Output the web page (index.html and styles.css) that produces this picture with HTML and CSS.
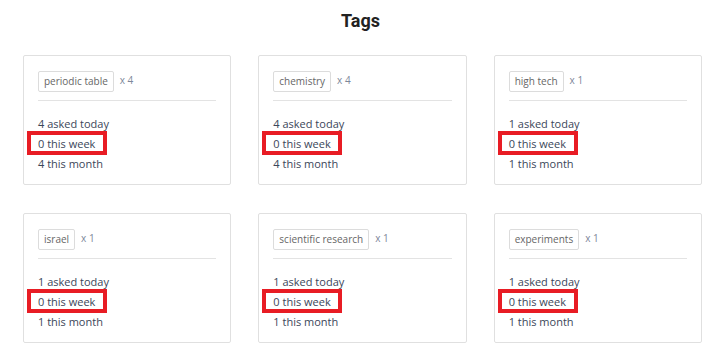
FILE: index.html
```html
<!DOCTYPE html>
<html>
<head>
  <title>Tags</title>
  <link rel="stylesheet" href="styles.css">
</head>
<body>

<h2 class="page-title">Tags</h2>

<div class="tag-grid">
  <div class="tag-card">
    <div class="tag-head">
      <span class="tag-pill">periodic table</span>
      <span class="tag-count">x 4</span>
    </div>
    <div class="tag-stats">
      <div>4 asked today</div>
      <div class="week">0 this week<span class="mark"></span></div>
      <div>4 this month</div>
    </div>
  </div>

  <div class="tag-card">
    <div class="tag-head">
      <span class="tag-pill">chemistry</span>
      <span class="tag-count">x 4</span>
    </div>
    <div class="tag-stats">
      <div>4 asked today</div>
      <div class="week">0 this week<span class="mark"></span></div>
      <div>4 this month</div>
    </div>
  </div>

  <div class="tag-card">
    <div class="tag-head">
      <span class="tag-pill">high tech</span>
      <span class="tag-count">x 1</span>
    </div>
    <div class="tag-stats">
      <div>1 asked today</div>
      <div class="week">0 this week<span class="mark"></span></div>
      <div>1 this month</div>
    </div>
  </div>

  <div class="tag-card">
    <div class="tag-head">
      <span class="tag-pill">israel</span>
      <span class="tag-count">x 1</span>
    </div>
    <div class="tag-stats">
      <div>1 asked today</div>
      <div class="week">0 this week<span class="mark"></span></div>
      <div>1 this month</div>
    </div>
  </div>

  <div class="tag-card">
    <div class="tag-head">
      <span class="tag-pill">scientific research</span>
      <span class="tag-count">x 1</span>
    </div>
    <div class="tag-stats">
      <div>1 asked today</div>
      <div class="week">0 this week<span class="mark"></span></div>
      <div>1 this month</div>
    </div>
  </div>

  <div class="tag-card">
    <div class="tag-head">
      <span class="tag-pill">experiments</span>
      <span class="tag-count">x 1</span>
    </div>
    <div class="tag-stats">
      <div>1 asked today</div>
      <div class="week">0 this week<span class="mark"></span></div>
      <div>1 this month</div>
    </div>
  </div>
</div>

</body>
</html>
```

FILE: styles.css
```css
body {
  margin: 0;
  font-family: "Open Sans", Arial, sans-serif;
  background: #fff;
}
.page-title {
  margin: 0;
  padding-top: 10px;
  height: 55px;
  box-sizing: border-box;
  text-align: center;
  font-family: Roboto, Arial, sans-serif;
  font-weight: 700;
  font-size: 18px;
  line-height: 22px;
  color: #222;
}
.tag-grid {
  display: grid;
  grid-template-columns: repeat(3, 1fr);
  column-gap: 27px;
  row-gap: 28px;
  padding: 0 19px 0 23px;
}
.tag-card {
  border: 1px solid #e0e0e0;
  border-radius: 2px;
  padding: 15px 14px 12px 14px;
  height: 130px;
  box-sizing: border-box;
}
.tag-head {
  display: flex;
  align-items: center;
  gap: 6px;
  padding-bottom: 8px;
  border-bottom: 1px solid #e3e3e3;
}
.tag-pill {
  border: 1px solid #dcdcdc;
  border-radius: 2px;
  padding: 0 5px;
  height: 19px;
  line-height: 19px;
  font-size: 10px;
  color: #666;
}
.tag-count {
  font-size: 10px;
  color: #7d879a;
  margin-top: -3px;
}
.tag-stats {
  padding-top: 13px;
  font-size: 11px;
  line-height: 20px;
  color: #3b4659;
}
.week {
  position: relative;
}
.mark {
  position: absolute;
  left: -11px;
  top: -3px;
  width: 72px;
  height: 16px;
  border: 4px solid #e81c24;
}
```
